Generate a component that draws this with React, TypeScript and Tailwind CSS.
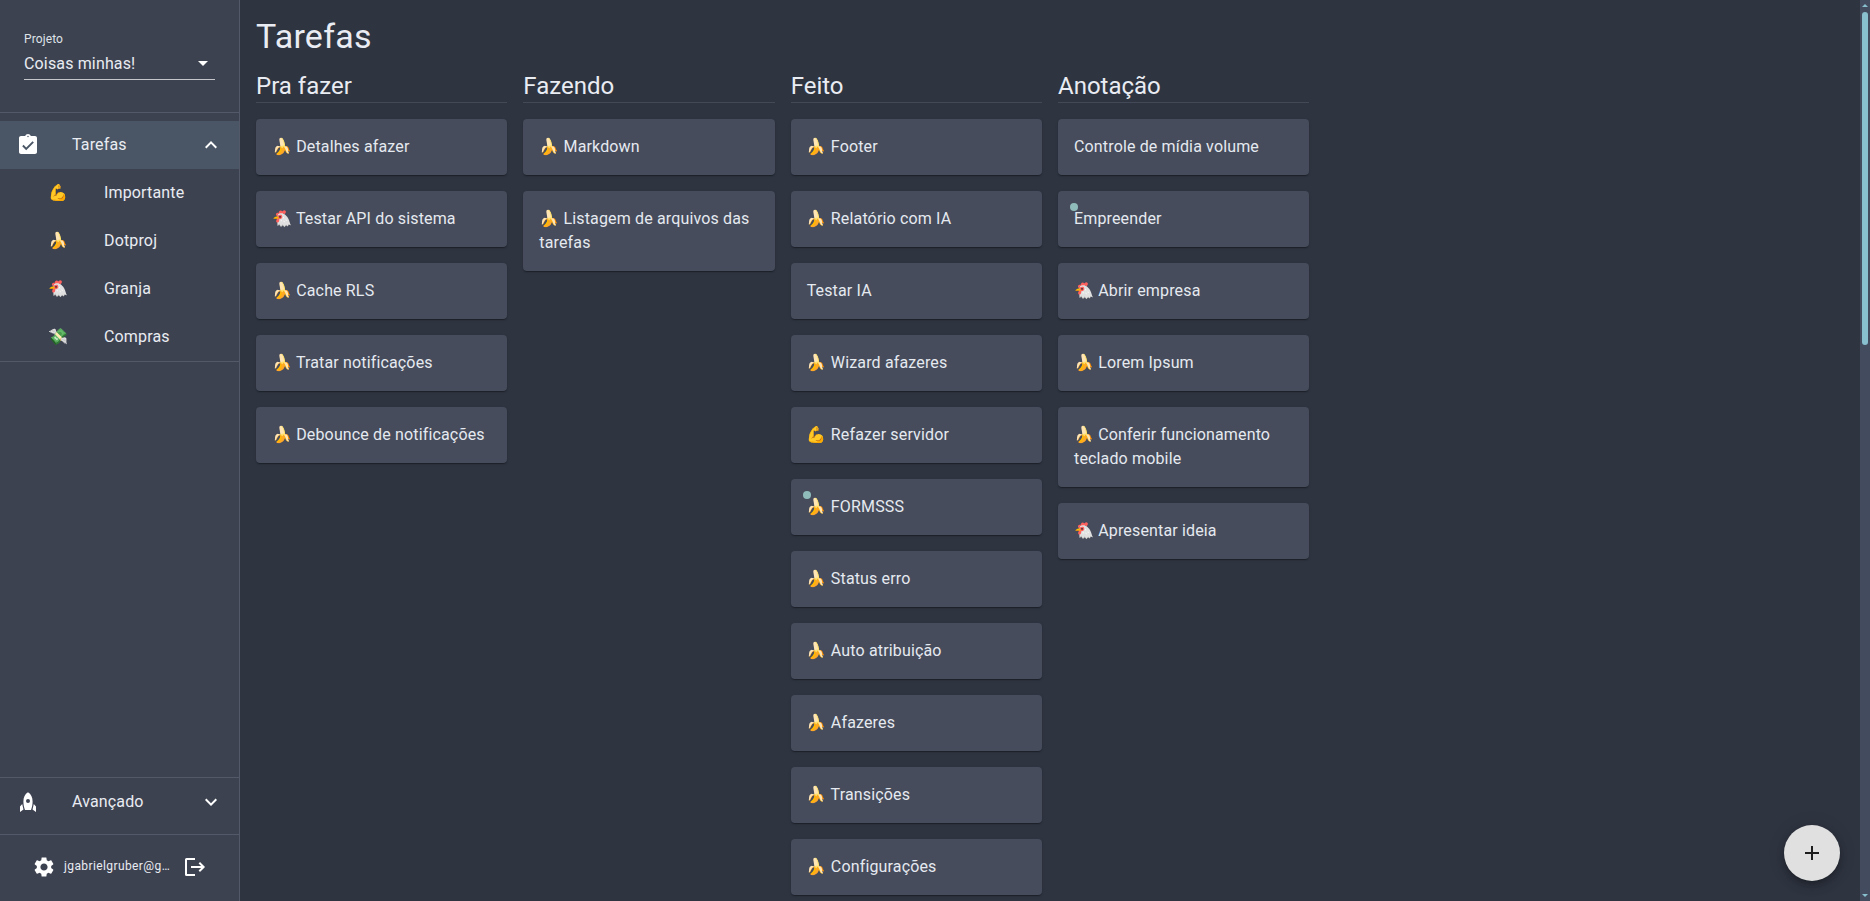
import type { ReactNode } from "react";

const B = "🍌";
const G = "🐔";
const M = "💪";

type Task = { text: string; dot?: boolean };

const columns: { title: string; tasks: Task[] }[] = [
  {
    title: "Pra fazer",
    tasks: [
      { text: `${B} Detalhes afazer` },
      { text: `${G} Testar API do sistema` },
      { text: `${B} Cache RLS` },
      { text: `${B} Tratar notificações` },
      { text: `${B} Debounce de notificações` },
    ],
  },
  {
    title: "Fazendo",
    tasks: [{ text: `${B} Markdown` }, { text: `${B} Listagem de arquivos das tarefas` }],
  },
  {
    title: "Feito",
    tasks: [
      { text: `${B} Footer` },
      { text: `${B} Relatório com IA` },
      { text: "Testar IA" },
      { text: `${B} Wizard afazeres` },
      { text: `${M} Refazer servidor` },
      { text: `${B} FORMSSS`, dot: true },
      { text: `${B} Status erro` },
      { text: `${B} Auto atribuição` },
      { text: `${B} Afazeres` },
      { text: `${B} Transições` },
      { text: `${B} Configurações` },
    ],
  },
  {
    title: "Anotação",
    tasks: [
      { text: "Controle de mídia volume" },
      { text: "Empreender", dot: true },
      { text: `${G} Abrir empresa` },
      { text: `${B} Lorem Ipsum` },
      { text: `${B} Conferir funcionamento teclado mobile` },
      { text: `${G} Apresentar ideia` },
    ],
  },
];

const projects = [
  { emoji: M, name: "Importante" },
  { emoji: B, name: "Dotproj" },
  { emoji: G, name: "Granja" },
  { emoji: "💸", name: "Compras" },
];

function Icon({ children }: { children: ReactNode }) {
  return (
    <svg viewBox="0 0 24 24" className="size-6 shrink-0 fill-white">
      {children}
    </svg>
  );
}

function Sidebar() {
  return (
    <aside className="flex w-60 shrink-0 flex-col border-r border-[#535968] bg-[#3d4251]">
      <div className="h-28 px-6 pt-[31px]">
        <div className="text-xs leading-4 tracking-[0.00938em] text-[#dfe2e8]">Projeto</div>
        <div className="mt-1 flex h-[29px] w-[191px] items-start justify-between border-b border-[#c4c6cb]">
          <span className="pt-px leading-6">Coisas minhas!</span>
          <Icon>
            <path d="M7 10l5 5 5-5z" />
          </Icon>
        </div>
      </div>
      <nav className="border-y border-[#535968] pt-2">
        <div className="flex h-12 items-center bg-[#4a5665] px-4">
          <Icon>
            <path
              fillRule="evenodd"
              d="M19 3h-4.180C14.400 1.840 13.300 1 12 1s-2.400.84-2.820 2H5c-1.100 0-2 .9-2 2v14c0 1.100.9 2 2 2h14c1.100 0 2-.9 2-2V5c0-1.100-.9-2-2-2zm-7-.25c.41 0 .75.340.75.750s-.34.750-.75.750-.75-.34-.75-.75.340-.75.750-.75z"
            />
            <path d="M6.900 12.500l3.300 3.300 7-7" fill="none" stroke="#4a5665" strokeWidth="1.900" />
          </Icon>
          <span className="ml-8 flex-1">Tarefas</span>
          <Icon>
            <path d="M12 8l-6 6 1.410 1.410L12 10.830l4.590 4.580L18 14z" />
          </Icon>
        </div>
        {projects.map((p) => (
          <div key={p.name} className="flex h-12 items-center pl-12">
            <span className="w-14">{p.emoji}</span>
            <span>{p.name}</span>
          </div>
        ))}
      </nav>
      <div className="flex-1" />
      <div className="h-[57px] border-t border-[#535968]">
        <div className="flex h-12 items-center px-4">
          <Icon>
            <path
              fillRule="evenodd"
              d="M12 2.200c3 1.600 4.600 5 4.600 9.300 0 3.200-.6 6-1.600 8.500H9c-1-2.500-1.600-5.300-1.600-8.500 0-4.300 1.600-7.700 4.600-9.300zm0 6.800a2 2 0 100 4 2 2 0 000-4z"
            />
            <path d="M6.200 14l1.300 5.500L4 22v-5.500zM17.800 14l-1.300 5.500L20 22v-5.500z" />
          </Icon>
          <span className="ml-8 flex-1">Avançado</span>
          <Icon>
            <path d="M16.590 8.590L12 13.170 7.410 8.590 6 10l6 6 6-6z" />
          </Icon>
        </div>
      </div>
      <div className="flex h-[67px] items-center border-t border-[#535968] pb-0.5 pl-8">
        <Icon>
          <path d="M19.140 12.940c.04-.3.060-.61.060-.94 0-.32-.02-.64-.07-.94l2.030-1.580c.18-.14.230-.41.120-.61l-1.920-3.320c-.12-.22-.37-.29-.59-.22l-2.390.96c-.5-.38-1.030-.7-1.620-.94l-.36-2.540c-.04-.24-.24-.41-.48-.41h-3.840c-.24 0-.43.170-.47.410l-.36 2.540c-.59.240-1.130.570-1.620.94l-2.390-.96c-.22-.08-.47 0-.59.220L2.740 8.870c-.12.210-.08.470.120.610l2.030 1.580c-.05.300-.09.630-.09.940s.02.640.070.94l-2.030 1.580c-.18.140-.23.410-.12.610l1.920 3.320c.12.220.37.290.590.220l2.390-.96c.5.380 1.030.7 1.620.94l.36 2.540c.05.240.24.410.480.410h3.840c.24 0 .44-.17.470-.41l.36-2.540c.59-.24 1.130-.56 1.620-.94l2.390.96c.22.080.47 0 .59-.22l1.920-3.320c.12-.22.070-.47-.12-.61l-2.010-1.580zM12 15.600c-1.980 0-3.600-1.620-3.600-3.600s1.620-3.600 3.600-3.600 3.600 1.620 3.600 3.600-1.620 3.600-3.600 3.600z" />
        </Icon>
        <span className="ml-2 w-[107px] pb-0.5 text-xs whitespace-nowrap tracking-[0.03333em]">
          jgabrielgruber@g…
        </span>
        <span className="ml-3">
          <svg viewBox="0 0 24 24" className="size-6 fill-none stroke-white stroke-2">
            <path d="M12 4H3.500q-.5 0-.5.500v15q0 .5.500.500H12" />
            <path d="M8 12h13M16.300 7.700l4.300 4.300-4.300 4.300" />
          </svg>
        </span>
      </div>
    </aside>
  );
}

function Card({ task }: { task: Task }) {
  return (
    <div className="relative rounded bg-[#464c5b] p-4 text-[#e5e9f0] shadow-[0_2px_1px_-1px_rgba(0,0,0,0.2),0_1px_1px_rgba(0,0,0,0.14),0_1px_3px_rgba(0,0,0,0.12)]">
      {task.dot && <span className="absolute top-3 left-3 size-2 rounded-full bg-[#8fbcbb]" />}
      <p className="relative">{task.text}</p>
    </div>
  );
}

export default function App() {
  return (
    <div className="flex h-screen overflow-hidden bg-[#2e3440] font-[Roboto,'Noto_Color_Emoji',sans-serif] text-base leading-6 tracking-[0.00938em] text-[#e9ecf2]">
      <Sidebar />
      <main className="min-w-0 flex-1 overflow-hidden pt-[15px] pl-4">
        <h1 className="text-[34px] leading-[42px] tracking-[0.00735em]">Tarefas</h1>
        <div className="mt-[13px] grid grid-cols-6">
          {columns.map((c) => (
            <section key={c.title} className="mr-4">
              <h2 className="mb-4 border-b border-[#434956] text-2xl leading-8 tracking-normal">{c.title}</h2>
              <div className="flex flex-col gap-4">
                {c.tasks.map((t) => (
                  <Card key={t.text} task={t} />
                ))}
              </div>
            </section>
          ))}
        </div>
      </main>
      <div className="flex w-2.5 shrink-0 flex-col items-center bg-[#434c5e]">
        <svg viewBox="0 0 10 12" className="h-3 w-2.5 fill-[#88c0d0]">
          <path d="M5 4L8 7H2z" />
        </svg>
        <div className="h-[333px] w-1.5 rounded-full bg-[#88c0d0]" />
        <div className="flex-1" />
        <svg viewBox="0 0 10 12" className="h-3 w-2.5 fill-[#88c0d0]">
          <path d="M5 8L8 5H2z" />
        </svg>
      </div>
      <button className="absolute right-[30px] bottom-5 flex size-14 items-center justify-center rounded-full bg-[#e0e0e0] shadow-[0_3px_5px_-1px_rgba(0,0,0,0.2),0_6px_10px_rgba(0,0,0,0.14),0_1px_18px_rgba(0,0,0,0.12)]">
        <svg viewBox="0 0 24 24" className="size-6 fill-black/87">
          <path d="M19 13h-6v6h-2v-6H5v-2h6V5h2v6h6v2z" />
        </svg>
      </button>
    </div>
  );
}
